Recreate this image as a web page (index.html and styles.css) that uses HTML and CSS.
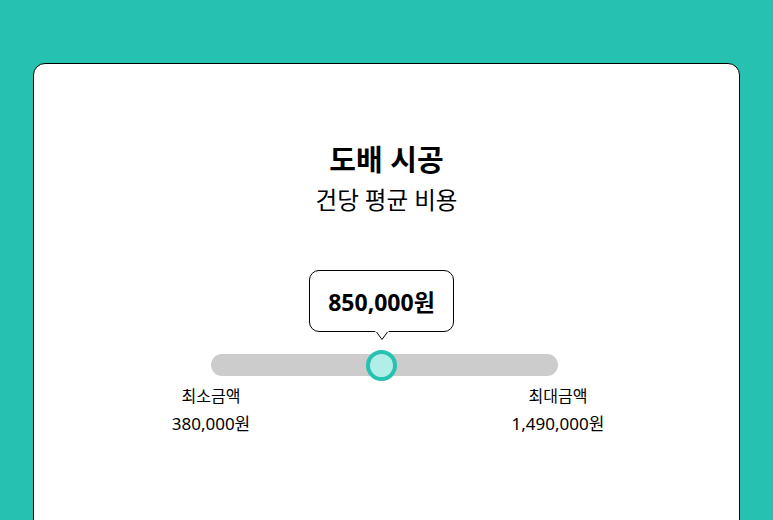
FILE: index.html
```html
<!DOCTYPE html>
<html lang="ko">
<head>
  <meta charset="UTF-8" />
  <meta name="viewport" content="width=device-width, initial-scale=1.0"/>
  <title>도배 시공</title>
  <link rel="stylesheet" href="styles.css">
</head>
<body>

  <!-- Price card -->
  <div class="card">
    <h1 class="title">도배 시공</h1>
    <p class="subtitle">건당 평균 비용</p>

    <div class="range-area">
      <div class="range">
        <div class="bubble" style="margin-left: 98px;">
          850,000원
          <svg class="bubble-tail" width="14" height="10" viewBox="0 0 14 10">
            <polygon points="0,0 7,9 14,0" fill="#fff" />
            <polyline points="1.5,1 7,8.5 12.5,1" fill="none" stroke="#000" stroke-width="1" />
          </svg>
        </div>

        <div class="track">
          <div class="thumb" style="left: 155px;"></div>
        </div>

        <div class="limits">
          <div class="limit">
            <span class="limit-label">최소금액</span>
            <span class="limit-value">380,000원</span>
          </div>
          <div class="limit">
            <span class="limit-label">최대금액</span>
            <span class="limit-value">1,490,000원</span>
          </div>
        </div>
      </div>
    </div>
  </div>

</body>
</html>
```

FILE: styles.css
```css
* {
  box-sizing: border-box;
}

body {
  margin: 0;
  font-family: 'Noto Sans', 'Noto Sans CJK KR', sans-serif;
  background-color: #27c1b1;
  color: #000;
  overflow: hidden;
}

/* Card */
.card {
  margin: 63px 33px 0;
  height: 520px;
  background-color: #fff;
  border: 1px solid #000;
  border-radius: 12px;
  padding-top: 77px;
  text-align: center;
}

.title {
  margin: 0;
  font-size: 29px;
  line-height: 38px;
  font-weight: 700;
}

.subtitle {
  margin: 5px 0 0;
  font-size: 23.5px;
  line-height: 32px;
}

/* Slider */
.range-area {
  padding-right: 4px;
}

.range {
  width: 347px;
  margin: 54px auto 0;
  text-align: left;
}

.bubble {
  position: relative;
  width: 145px;
  height: 62px;
  border: 1px solid #000;
  border-radius: 10px;
  background-color: #fff;
  display: flex;
  justify-content: center;
  align-items: center;
  font-size: 23px;
  font-weight: 700;
}

.bubble-tail {
  position: absolute;
  left: 50%;
  bottom: -10px;
  margin-left: -7px;
  display: block;
}

.track {
  position: relative;
  height: 22px;
  margin-top: 22px;
  background-color: #cccccc;
  border-radius: 11px;
}

.thumb {
  position: absolute;
  top: 50%;
  width: 31px;
  height: 31px;
  margin-top: -15.5px;
  border: 4px solid #27c1b1;
  border-radius: 50%;
  background-color: #b2eee8;
}

.limits {
  display: flex;
  justify-content: space-between;
  margin: 9px -60px 0;
}

.limit {
  width: 120px;
  display: flex;
  flex-direction: column;
  align-items: center;
}

.limit-label {
  font-size: 16px;
  line-height: 22px;
}

.limit-value {
  margin-top: 5px;
  font-size: 17px;
  line-height: 24px;
}
```
